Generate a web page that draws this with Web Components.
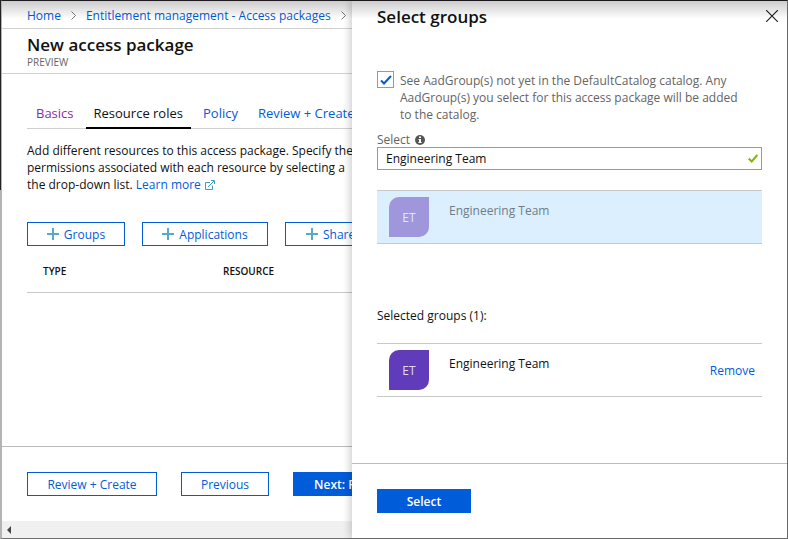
<!DOCTYPE html>
<html lang="en">
<head>
<meta charset="utf-8">
<title>New access package</title>
<style>
html,body{height:100%}
body{margin:0;background:#fff;color:#111;font:12px/17px "Open Sans","Noto Sans",sans-serif;--blue:#015cda;--rule:#c8c8c8;--muted:#646464}
</style>
</head>
<body>
<ap-shell>
  <ap-blade slot="main">
    <ap-breadcrumb slot="crumbs"></ap-breadcrumb>
    <ap-title slot="title" sub="PREVIEW">New access package</ap-title>
    <ap-tabs></ap-tabs>
    <ap-intro></ap-intro>
    <ap-toolbar>
      <ap-button icon style="--w:98px">Groups</ap-button>
      <ap-button icon style="--w:126px">Applications</ap-button>
      <ap-button icon>SharePoint sites</ap-button>
    </ap-toolbar>
    <ap-resources></ap-resources>
    <ap-button slot="actions" style="--w:130px">Review + Create</ap-button>
    <ap-button slot="actions" style="--w:88px">Previous</ap-button>
    <ap-button slot="actions" primary style="--w:120px">Next: Policy &gt;</ap-button>
  </ap-blade>
  <ap-drawer slot="side" heading="Select groups">
    <ap-check>See AadGroup(s) not yet in the DefaultCatalog catalog. Any AadGroup(s) you select for this access package will be added to the catalog.</ap-check>
    <ap-search value="Engineering Team">Select</ap-search>
    <ap-group dim initials="ET">Engineering Team</ap-group>
    <ap-caption>Selected groups (1):</ap-caption>
    <ap-group removable initials="ET">Engineering Team</ap-group>
    <ap-button slot="actions" primary style="--w:94px">Select</ap-button>
  </ap-drawer>
</ap-shell>
<script>
const define = (name, css, html) => customElements.define(name, class extends HTMLElement {
  constructor() {
    super();
    const markup = typeof html === 'function' ? html(this) : html;
    this.attachShadow({mode: 'open'}).innerHTML =
      `<style>*{box-sizing:border-box}:host{box-sizing:border-box;display:block}a{color:var(--blue);text-decoration:none}button{font:inherit;cursor:pointer}${css}</style>${markup}`;
  }
});

define('ap-shell', `
  :host{display:grid;grid-template-columns:minmax(0,1fr) 435px;min-height:100vh;position:relative;
    border:solid #6f6f6f;border-width:1px 1px 1px 2px;border-top-color:#1e1a20;border-left-color:#b4b4b4}
  .shade{position:absolute;inset:0 0 auto 0;height:18px;pointer-events:none;background:linear-gradient(#0003,#0000);z-index:3}
  .edge{position:absolute;left:-2px;top:-1px;width:1px;height:190px;background:#222}
  ::slotted([slot=side]){z-index:2}`,
  `<slot name="main"></slot><slot name="side"></slot><div class="shade"></div><div class="edge"></div>`);

define('ap-blade', `
  :host{display:flex;flex-direction:column;overflow:hidden;white-space:nowrap}
  main{flex:1;padding:24px 0 0 25px}
  footer{display:flex;gap:24px;padding:25px 0 25px 25px;border-top:1px solid #bbb}
  .scroll{height:17px;background:#f0f0f0;display:flex;align-items:center;padding-left:5px}`,
  `<slot name="crumbs"></slot><slot name="title"></slot><main><slot></slot></main>
   <footer><slot name="actions"></slot></footer>
   <div class="scroll"><svg width="4" height="8"><path d="M4 0v8L0 4z" fill="#444"/></svg></div>`);

define('ap-breadcrumb', `
  nav{display:flex;align-items:center;height:28px;padding:2px 0 0 25px;border-bottom:1px solid #d2d2d2}
  svg{margin:0 10px;flex:none}`, () => {
  const sep = `<svg width="5" height="9" fill="none" stroke="#777"><path d="M.5.5l4 4-4 4"/></svg>`;
  return `<nav aria-label="Breadcrumb"><a href="#home">Home</a>${sep}<a href="#em">Entitlement management - Access packages</a>${sep}</nav>`;
});

define('ap-title', `
  :host{padding:6px 0 4px 25px;height:45px;border-bottom:1px solid #d2d2d2}
  h1{margin:0;font-size:17px;line-height:20px;font-weight:600}
  small{display:block;font-size:10px;line-height:14px;color:var(--muted)}`,
  el => `<h1><slot></slot></h1><small>${el.getAttribute('sub')}</small>`);

define('ap-tabs', `
  nav{display:flex;border-bottom:1px solid #d0d0d0;font-size:13px;gap:4px}
  a{height:31px;line-height:31px;padding:0 8px;margin-bottom:-1px}
  .seen{color:#8a2da5;padding-left:9px}
  .on{color:#111;border-bottom:2px solid #000}`,
  `<nav><a class="seen" href="#basics">Basics</a><a class="on" href="#roles" aria-current="page">Resource roles</a><a href="#policy">Policy</a><a href="#review">Review + Create</a></nav>`);

define('ap-intro', `p{margin:13px 0 0}svg{vertical-align:-1px;margin-left:4px}`,
  `<p>Add different resources to this access package. Specify the<br>permissions associated with each resource by selecting a<br>the drop-down list. <a href="#more">Learn more<svg width="10" height="10" fill="none" stroke="#3f9dc4"><path d="M5 2.5H.5v7h7V5.5M3 7L9 1M6 .5h3.500v3.500"/></svg></a></p>`);

define('ap-toolbar', `:host{display:flex;gap:17px;margin-top:29px}`, `<slot></slot>`);

define('ap-button', `
  :host{flex:none}
  button{width:var(--w,auto);height:24px;padding:0 20px;border:1px solid var(--blue);background:#fff;color:var(--blue);font-weight:500;
    display:flex;align-items:center;justify-content:center;gap:5px;white-space:nowrap}
  :host([primary]) button{background:var(--blue);color:#fff;font-weight:600}
  :host([style]) button{padding:0}
  svg{flex:none}`,
  el => `<button type="button">${el.hasAttribute('icon') ? `<svg width="12" height="12" stroke="#59a9cb" stroke-width="2"><path d="M0 6h12M6 0v12"/></svg>` : ''}<span><slot></slot></span></button>`);

define('ap-resources', `
  table{margin-top:17px;width:100%;min-width:400px;border-collapse:collapse;table-layout:fixed;border-bottom:1px solid var(--rule)}
  th{height:28px;padding:0 0 12px 16px;text-align:left;font-size:10px;line-height:17px;font-weight:600}
  th:first-child{width:180px}`,
  `<table><thead><tr><th scope="col">TYPE</th><th scope="col">RESOURCE</th></tr></thead></table>`);

define('ap-drawer', `
  :host{display:flex;flex-direction:column;background:#fff;box-shadow:-2px 0 8px #0003}
  header{display:flex;justify-content:space-between;align-items:flex-start;padding:5px 9px 0 25px}
  h2{margin:0;font-size:17px;line-height:22px;font-weight:600}
  header button{border:0;background:none;padding:4px 0 0;display:flex}
  .body{flex:1;padding:43px 25px 0}
  footer{padding:25px 25px;border-top:1px solid #bbb}`,
  el => `<header><h2>${el.getAttribute('heading')}</h2><button type="button" aria-label="Close"><svg width="12" height="12" stroke="#222" stroke-width="1.200"><path d="M0 0l12 12M12 0L0 12"/></svg></button></header>
   <div class="body"><slot></slot></div><footer><slot name="actions"></slot></footer>`);

define('ap-check', `
  :host{display:flex;gap:6px;color:var(--muted)}
  .box{display:grid;flex:none;height:17px}
  input{appearance:none;grid-area:1/1;width:17px;height:17px;margin:0;border:1px solid #999;background:#fff}
  svg{grid-area:1/1;place-self:center;pointer-events:none;display:none}
  input:checked + svg{display:block}
  label{padding:1px 16px 0 0}`,
  `<span class="box"><input type="checkbox" id="c" checked><svg width="12" height="10" fill="none" stroke="#015cda" stroke-width="2"><path d="M1 5.500l3 3L11 1"/></svg></span><label for="c"><slot></slot></label>`);

define('ap-search', `
  :host{margin-top:8px}
  .top{display:flex;align-items:center;gap:5px;color:var(--muted);height:16px}
  .top svg{margin-top:2px}
  .field{display:grid}
  input{grid-area:1/1;width:100%;height:23px;border:1px solid #999;background:#fff;padding:0 28px 0 8px;font:inherit;color:#111;outline:0}
  .ok{grid-area:1/1;place-self:center end;margin-right:4px}`,
  el => `<div class="top"><label for="q"><slot></slot></label><svg width="10" height="10"><circle cx="5" cy="5" r="5" fill="#555"/><path d="M4 1.500h2v1.500H4zM3.500 4H6v3h.6v1H3.400V7H4V5h-.5z" fill="#fff"/></svg></div>
   <div class="field"><input id="q" type="text" value="${el.getAttribute('value')}"><svg class="ok" width="10" height="9" fill="none" stroke="#7fba00" stroke-width="2"><path d="M.7 4.500l3 3L9.300 1"/></svg></div>`);

define('ap-group', `
  :host{display:flex;height:54px;padding:6px 7px 6px 12px;border:solid var(--rule);border-width:1px 0}
  :host([dim]){margin-top:20px;background:#dceffe;color:#6d7e8b}
  .avatar{width:40px;height:40px;display:grid;place-items:center;background:#603cba;color:#e0d8f2;border-radius:10px 0 10px 0}
  :host([dim]) .avatar{background:#a096dc;color:#e4e4f8}
  .name{flex:1;margin:5px 0 0 20px}
  button{align-self:center;border:0;background:none;color:var(--blue);padding:0}`,
  el => `<span class="avatar">${el.getAttribute('initials')}</span><span class="name"><slot></slot></span>${el.hasAttribute('removable') ? '<button type="button">Remove</button>' : ''}`);

define('ap-caption', `:host{margin:63px 0 19px}`, `<slot></slot>`);
</script>
</body>
</html>
